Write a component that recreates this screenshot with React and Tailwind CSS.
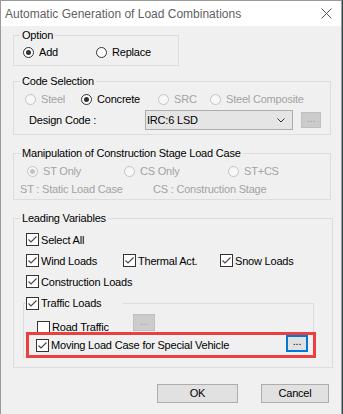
import React from "react";

const Radio = ({ label, checked, disabled, className }) => (
  <div className={`flex items-center ${className}`}>
    <span
      className={`w-[11px] h-[11px] rounded-full border flex items-center justify-center ${
        disabled ? "border-[#c4c4c4] bg-[#f7f7f7]" : "border-[#333333] bg-white"
      }`}
    >
      {checked && (
        <span className={`w-[5px] h-[5px] rounded-full ${disabled ? "bg-[#c4c4c4]" : "bg-[#333333]"}`} />
      )}
    </span>
    <span className={`ml-[5px] ${disabled ? "text-[#a3a3a3]" : "text-black"}`}>{label}</span>
  </div>
);

const Check = ({ label, checked, className }) => (
  <div className={`flex items-center ${className}`}>
    <span className="w-[13px] h-[13px] border border-[#333333] bg-white flex items-center justify-center shrink-0">
      {checked && (
        <svg width="11" height="11" viewBox="0 0 11 11">
          <path d="M1.5 5.5 L4 8 L9.5 2.5" fill="none" stroke="#444444" strokeWidth="1.1" />
        </svg>
      )}
    </span>
    <span className="ml-[2px]">{label}</span>
  </div>
);

const DotsButton = ({ disabled, className }) => (
  <div
    className={`flex items-end justify-center pb-[3px] leading-none ${
      disabled
        ? "bg-[#cccccc] border border-[#bfbfbf] text-[#a0a0a0]"
        : "bg-[#e1e1e1] border-2 border-[#0078d7] text-black"
    } ${className}`}
  >
    ...
  </div>
);

export default function App() {
  return (
    <div className="w-[343px] h-[414px] bg-[#34484c] overflow-hidden font-['Liberation_Sans',Arial,sans-serif] text-[11px] tracking-[-0.2px] leading-[14px] text-black">
      <div className="w-[342px] h-[414px] border-x border-t border-[#9a9a9a] bg-[#f0f0f0] flex flex-col">
        {/* Title bar */}
        <div className="h-[25px] shrink-0 bg-white flex items-center justify-between pl-[4px] pr-[9px]">
          <span className="text-[12px] tracking-normal text-[#5f5f5f]">Automatic Generation of Load Combinations</span>
          <svg width="11" height="11" viewBox="0 0 11 11">
            <path d="M0.5 0.5 L10.5 10.5 M10.5 0.5 L0.5 10.5" stroke="#555555" strokeWidth="1" />
          </svg>
        </div>

        <div className="pl-[12px] pr-[12px] flex flex-col">
          {/* Option */}
          <fieldset className="mt-[2px] w-[166px] h-[38px] border border-[#dcdcdc] pt-[3px]">
            <legend className="ml-[6px] px-[2px] leading-[14px]">Option</legend>
            <div className="flex">
              <Radio label="Add" checked className="ml-[9px] w-[73px]" />
              <Radio label="Replace" />
            </div>
          </fieldset>

          {/* Code Selection */}
          <fieldset className="mt-[8px] w-[318px] h-[61px] border border-[#dcdcdc] pt-[4px]">
            <legend className="ml-[6px] px-[2px] leading-[14px]">Code Selection</legend>
            <div className="flex">
              <Radio label="Steel" disabled className="ml-[11px] w-[56px]" />
              <Radio label="Concrete" checked className="w-[77px]" />
              <Radio label="SRC" disabled className="w-[52px]" />
              <Radio label="Steel Composite" disabled />
            </div>
            <div className="flex items-center mt-[4px]">
              <span className="ml-[15px] w-[116px]">Design Code :</span>
              <div className="w-[148px] h-[20px] bg-[#e5e5e5] border border-[#adadad] flex items-center justify-between pl-[1px] pr-[7px]">
                <span>IRC:6 LSD</span>
                <svg width="8" height="5" viewBox="0 0 8 5">
                  <path d="M0.5 0.5 L4 4 L7.5 0.5" fill="none" stroke="#333333" strokeWidth="1" />
                </svg>
              </div>
              <DotsButton disabled className="ml-[8px] w-[20px] h-[16px]" />
            </div>
          </fieldset>

          {/* Manipulation */}
          <fieldset className="mt-[11px] w-[318px] h-[54px] border border-[#dcdcdc] pt-[4px]">
            <legend className="ml-[6px] px-[2px] leading-[14px]">Manipulation of Construction Stage Load Case</legend>
            <div className="flex">
              <Radio label="ST Only" checked disabled className="ml-[13px] w-[97px]" />
              <Radio label="CS Only" disabled className="w-[104px]" />
              <Radio label="ST+CS" disabled />
            </div>
            <div className="flex mt-[4px] text-[#a3a3a3]">
              <span className="ml-[6px] w-[133px]">ST : Static Load Case</span>
              <span>CS : Construction Stage</span>
            </div>
          </fieldset>

          {/* Leading Variables */}
          <fieldset className="mt-[11px] w-[320px] h-[157px] border border-[#dcdcdc] pt-[4px]">
            <legend className="ml-[6px] px-[2px] leading-[14px]">Leading Variables</legend>
            <Check label="Select All" checked className="h-[21px] ml-[12px]" />
            <div className="flex h-[21px] items-center">
              <Check label="Wind Loads" checked className="ml-[12px] w-[97px]" />
              <Check label="Thermal Act." checked className="w-[97px]" />
              <Check label="Snow Loads" checked />
            </div>
            <Check label="Construction Loads" checked className="h-[21px] ml-[12px]" />

            <fieldset className="mt-[4px] ml-[9px] w-[291px] h-[62px] border border-[#dcdcdc] pt-[4px]">
              <legend className="ml-[2px] w-[97px] leading-[14px]">
                <Check label="Traffic Loads" checked />
              </legend>
              <div className="flex items-start h-[19px]">
                <Check label="Road Traffic" className="ml-[13px] mt-[6px] w-[96px]" />
                <DotsButton disabled className="w-[22px] h-[17px]" />
              </div>
              <div className="relative flex items-start justify-between mt-[2px] h-[17px]">
                <Check label="Moving Load Case for Special Vehicle" checked className="ml-[12px] mt-[3px]" />
                <DotsButton className="mr-[5px] w-[22px] h-[17px]" />
                <div className="absolute left-[2px] top-[-3px] w-[290px] h-[26px] border-[3px] border-[#e8413f]" />
              </div>
            </fieldset>
          </fieldset>

          {/* Buttons */}
          <div className="flex justify-end gap-[23px] mt-[16px]">
            <button className="w-[81px] h-[19px] bg-[#e1e1e1] border border-[#adadad] leading-none">OK</button>
            <button className="w-[68px] h-[19px] bg-[#e1e1e1] border border-[#adadad] leading-none">Cancel</button>
          </div>
        </div>
      </div>
    </div>
  );
}
